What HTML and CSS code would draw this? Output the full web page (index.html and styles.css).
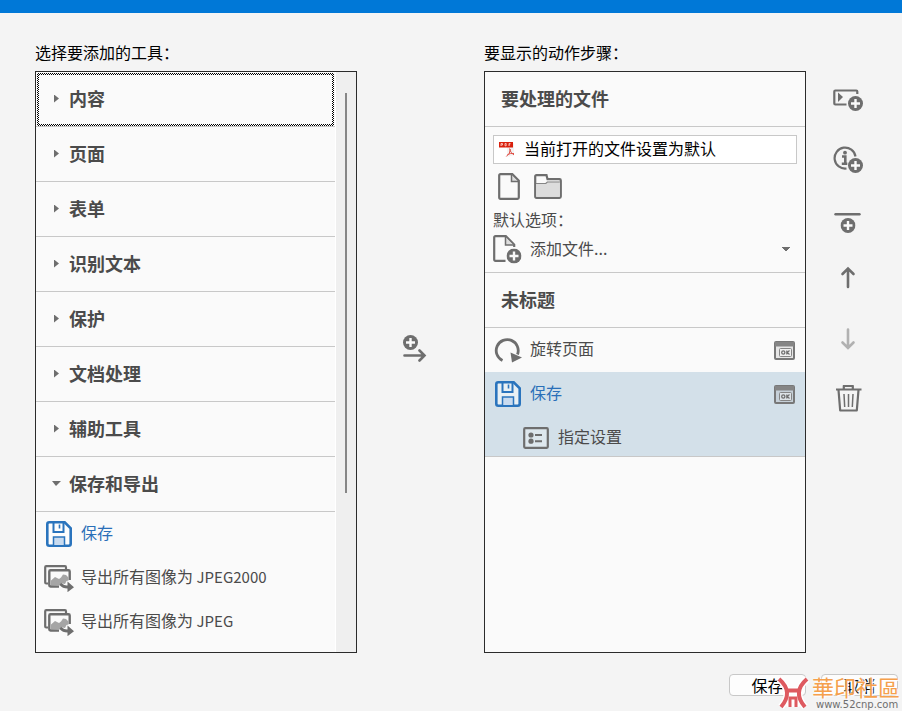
FILE: index.html
```html
<!DOCTYPE html>
<html lang="zh-CN">
  <head>
    <meta charset="UTF-8" />
    <meta name="viewport" content="width=device-width, initial-scale=1.0" />
    <title>创建新动作</title>
    <link rel="stylesheet" href="styles.css" />
  </head>
  <body>
    <svg class="sprite" aria-hidden="true">
      <symbol id="plus" viewBox="0 0 15 15">
        <circle cx="7.5" cy="7.5" r="7.5" fill="#6e6e6e" />
        <path d="M7.5 3v9M3 7.5h9" stroke="#fafafa" stroke-width="2.4" />
      </symbol>
      <symbol id="floppy" viewBox="0 0 26 26">
        <path d="M2.5 1.3h16.2l6 6v15.4q0 2-2 2H3.3q-2 0-2-2V3.3q0-2 2-2z" fill="#fff" fill-opacity=".5" stroke="#2a74bd" stroke-width="2.6" />
        <path d="M7.500 2v9h10V2" fill="none" stroke="#2a74bd" stroke-width="2" />
        <path d="M13.500 3.500v4" stroke="#2a74bd" stroke-width="1.600" />
        <path d="M7.500 24v-8h11v8" fill="#c9dbef" stroke="#2a74bd" stroke-width="1.500" />
      </symbol>
      <symbol id="images" viewBox="0 0 30 27">
        <path d="M4 18.500H2.200Q1.200 18.500 1.200 17.500V2.200Q1.200 1.200 2.200 1.200H21Q22 1.200 22 2.500V4" fill="none" stroke="#6e6e6e" stroke-width="2.200" />
        <path d="M15 21.500H6.500Q5.300 21.500 5.300 20.300V6.500Q5.300 5.300 6.500 5.300H24.500Q25.700 5.300 25.700 6.500V15" fill="none" stroke="#6e6e6e" stroke-width="2.400" />
        <path d="M7 20V15.500l4-3.500 4 2 2-1.500 2-3 3 .5 2.500 2.500v3l-2 .5-1.500 3-4-.8-2 2.800z" fill="#a5a5a5" />
        <path d="M17 17.800q3 3 6.500 2.700V16.500l6.500 5.700-6.500 5v-3.700q-5 0-8-3.500z" fill="#6e6e6e" />
      </symbol>
      <symbol id="page" viewBox="0 0 22 27">
        <path d="M2.500 1.200h11.800l6.500 6.500v16.800q0 1.300-1.300 1.300H2.500q-1.300 0-1.300-1.300v-22q0-1.300 1.300-1.300z" fill="#fafafa" stroke="#6e6e6e" stroke-width="2.200" />
        <path d="M13.500 2v6.500h6.500" fill="#ddd" stroke="#6e6e6e" stroke-width="1.500" />
      </symbol>
      <symbol id="folder" viewBox="0 0 28 25">
        <path d="M1.200 22.500V2.500q0-1.300 1.300-1.300h10l1 4h12q1.300 0 1.300 1.300V22.500q0 1.300-1.300 1.300h-23q-1.300 0-1.300-1.300z" fill="#fafafa" stroke="#6e6e6e" stroke-width="2.200" />
        <path d="M2.200 9.500h9.600l1.500-2h12.500v15.300H2.200z" fill="#dcdcdc" />
        <path d="M2 9.500h9.800l1.500-1.500h12.500" fill="none" stroke="#858585" stroke-width="1.200" />
      </symbol>
      <symbol id="add-file" viewBox="0 0 29 29">
        <path d="M12.500 25.800H2.500q-1.300 0-1.300-1.300v-22q0-1.300 1.300-1.300h10.300l8.400 8.400V12" fill="none" stroke="#6e6e6e" stroke-width="2.200" />
        <path d="M12.500 2v8h8" fill="#ddd" stroke="#6e6e6e" stroke-width="1.500" />
        <use href="#plus" x="13.500" y="13.500" width="15" height="15" />
      </symbol>
      <symbol id="rotate" viewBox="0 0 28 25">
        <path d="M8.500 22.500A11 11 0 1 1 23.500 16.500" fill="none" stroke="#6e6e6e" stroke-width="2.800" />
        <path d="M16.500 14.500L28 19.500 18 24.500z" fill="#6e6e6e" />
      </symbol>
      <symbol id="ok" viewBox="0 0 21 19">
        <rect x="1" y="1" width="19" height="17" rx="1" fill="#8a8a8a" fill-opacity=".18" stroke="#787878" stroke-width="2" />
        <path d="M1 1h19v4.500H1z" fill="#858585" />
        <rect x="5.500" y="7.500" width="12" height="8" rx="1" fill="#fff" fill-opacity=".4" stroke="#858585" />
        <circle cx="9.300" cy="11.500" r="1.600" fill="none" stroke="#6e6e6e" stroke-width="1.300" />
        <path d="M12.800 9.500v4M15.500 9.500l-2.200 2 2.200 2" fill="none" stroke="#6e6e6e" stroke-width="1.200" />
      </symbol>
      <symbol id="settings" viewBox="0 0 26 22">
        <rect x="1.200" y="1.200" width="23.600" height="19.600" rx="1" fill="#fff" fill-opacity=".25" stroke="#6e6e6e" stroke-width="2.200" />
        <circle cx="8" cy="8" r="2.600" fill="#6e6e6e" />
        <circle cx="8" cy="14.200" r="2.600" fill="#6e6e6e" />
        <path d="M12 8h7M12 14.200h7" stroke="#6e6e6e" stroke-width="2" />
      </symbol>
    </svg>

    <header class="titlebar"></header>
    <main class="editor">
      <section class="column">
        <h2 class="caption">选择要添加的工具：</h2>
        <div class="panel tools">
          <div class="tool-list">
            <div class="group"><button class="group-toggle focused">内容</button></div>
            <div class="group"><button class="group-toggle">页面</button></div>
            <div class="group"><button class="group-toggle">表单</button></div>
            <div class="group"><button class="group-toggle">识别文本</button></div>
            <div class="group"><button class="group-toggle">保护</button></div>
            <div class="group"><button class="group-toggle">文档处理</button></div>
            <div class="group"><button class="group-toggle">辅助工具</button></div>
            <div class="group"><button class="group-toggle open">保存和导出</button></div>
            <button class="row active">
              <span class="icon"><svg width="26" height="26"><use href="#floppy" /></svg></span>
              <span class="name">保存</span>
            </button>
            <button class="row">
              <span class="icon"><svg width="30" height="27"><use href="#images" /></svg></span>
              <span class="name">导出所有图像为 <span class="latin">JPEG2000</span></span>
            </button>
            <button class="row">
              <span class="icon"><svg width="30" height="27"><use href="#images" /></svg></span>
              <span class="name">导出所有图像为 <span class="latin">JPEG</span></span>
            </button>
          </div>
          <div class="scrollbar"><div class="thumb"></div></div>
        </div>
      </section>

      <div class="transfer">
        <button class="icon-button" aria-label="添加到右侧">
          <svg width="24" height="27" viewBox="0 0 24 27">
            <use href="#plus" x="0" y="0" width="15" height="15" />
            <path d="M1.500 20.500h20M16.500 15.500l5 5-5 5" fill="none" stroke="#6e6e6e" stroke-width="2.600" stroke-linecap="round" />
          </svg>
        </button>
      </div>

      <section class="column">
        <h2 class="caption">要显示的动作步骤：</h2>
        <div class="panel">
          <h3 class="panel-title">要处理的文件</h3>
          <div class="files">
            <div class="file-field">
              <svg width="18" height="18" viewBox="0 0 18 18" aria-hidden="true">
                <path d="M9 6l7-4v12l-7 2z" fill="#f3f3f3" />
                <path d="M1 1h14v5.500H1z" fill="#d9200d" />
                <path d="M3 5V2.500h1.500V4H3M7 2.500v2.300h1.200V2.500zM11 5V2.500h1.500M11 3.800h1.200" fill="none" stroke="#ffd8d2" stroke-width=".8" />
                <path d="M11.500 7.500q.8 4.500 4.500 6.500M12.300 8q0 5-4 7.500M9.500 13.500q3-1.500 6.500-1" fill="none" stroke="#e0534a" />
              </svg>
              <input type="text" value="当前打开的文件设置为默认" aria-label="要处理的文件" readonly />
            </div>
            <div class="sources">
              <button class="icon-button" aria-label="添加文件"><svg width="22" height="27"><use href="#page" /></svg></button>
              <button class="icon-button" aria-label="添加文件夹"><svg width="28" height="25"><use href="#folder" /></svg></button>
            </div>
            <label class="option-label" for="default-option">默认选项：</label>
            <div class="option">
              <svg width="29" height="29"><use href="#add-file" /></svg>
              <select id="default-option">
                <option>添加文件...</option>
              </select>
            </div>
          </div>
          <h3 class="panel-title">未标题</h3>
          <div class="row">
            <span class="icon"><svg width="28" height="25"><use href="#rotate" /></svg></span>
            <span class="name">旋转页面</span>
            <button class="icon-button prompt" aria-label="提示用户"><svg width="21" height="19"><use href="#ok" /></svg></button>
          </div>
          <div class="selected">
            <div class="row active">
              <span class="icon"><svg width="26" height="26"><use href="#floppy" /></svg></span>
              <span class="name">保存</span>
              <button class="icon-button prompt" aria-label="提示用户"><svg width="21" height="19"><use href="#ok" /></svg></button>
            </div>
            <button class="row sub">
              <span class="icon"><svg width="26" height="22"><use href="#settings" /></svg></span>
              <span class="name">指定设置</span>
            </button>
          </div>
        </div>
      </section>

      <nav class="sidebar">
        <button class="icon-button" aria-label="添加面板">
          <svg width="30" height="30" viewBox="0 0 30 30">
            <path d="M13.500 19.500H2.300q-1 0-1-1V6.500q0-1 1-1h21q1 0 1 1V9" fill="none" stroke="#6e6e6e" stroke-width="2.200" />
            <path d="M5 7.500l5 4.500L5 17z" fill="#6e6e6e" />
            <use href="#plus" x="15" y="11" width="15" height="15" />
          </svg>
        </button>
        <button class="icon-button" aria-label="添加说明">
          <svg width="30" height="30" viewBox="0 0 30 30">
            <path d="M13.500 23.500A10.500 10.500 0 1 1 22.500 11.500" fill="none" stroke="#6e6e6e" stroke-width="2.200" />
            <circle cx="12" cy="7.700" r="1.900" fill="#6e6e6e" />
            <path d="M9 11.500h3.300v7M8.800 18.800h5.500" fill="none" stroke="#6e6e6e" stroke-width="2.600" />
            <use href="#plus" x="15" y="13" width="15" height="15" />
          </svg>
        </button>
        <button class="icon-button" aria-label="添加分隔线">
          <svg width="30" height="30" viewBox="0 0 30 30">
            <path d="M2.500 9.300h24" stroke="#6e6e6e" stroke-width="2.400" stroke-linecap="round" />
            <use href="#plus" x="7.500" y="13" width="15" height="15" />
          </svg>
        </button>
        <button class="icon-button" aria-label="上移">
          <svg width="30" height="30" viewBox="0 0 30 30">
            <path d="M15 22V4M9.500 9L15 3.500 20.500 9" fill="none" stroke="#6e6e6e" stroke-width="2.600" stroke-linecap="round" />
          </svg>
        </button>
        <button class="icon-button" aria-label="下移" disabled>
          <svg width="30" height="30" viewBox="0 0 30 30">
            <path d="M15 4.500V22M9.500 17.500L15 23l5.500-5.500" fill="none" stroke="#b1b1b1" stroke-width="2.600" stroke-linecap="round" />
          </svg>
        </button>
        <button class="icon-button" aria-label="删除">
          <svg width="30" height="30" viewBox="0 0 30 30">
            <path d="M3 4.500h25.500M10.800 4V1h9v3M5.500 5l1.700 20.500h16.600l1.700-20.500" fill="none" stroke="#6e6e6e" stroke-width="2.200" stroke-linejoin="round" />
            <path d="M11 9l.7 13M15.500 9v13M20 9l-.7 13" stroke="#6e6e6e" stroke-width="1.500" />
          </svg>
        </button>
      </nav>
    </main>

    <footer class="actions">
      <button class="action">保存</button>
      <button class="action">取消</button>
      <div class="watermark">
        <svg width="34" height="34" viewBox="0 0 34 34" aria-hidden="true">
          <g fill="none" stroke="#fff" stroke-width="7">
            <path d="M3 3Q18 16 5 31M31 3Q16 16 29 31M9 14.500H25M14 31V22H20V31" />
          </g>
          <g fill="none" stroke="#de5a60" stroke-width="4">
            <path d="M3 3Q18 16 5 31M31 3Q16 16 29 31M9 14.500H25" />
            <path d="M14 31V22H20V31" stroke-width="3" />
          </g>
        </svg>
        <div class="watermark-text">
          <span class="watermark-name">華印社區</span>
          <span class="watermark-url">www.52cnp.com</span>
        </div>
      </div>
    </footer>
  </body>
</html>
```

FILE: styles.css
```css
* {
  box-sizing: border-box;
}
body {
  display: flex;
  flex-direction: column;
  min-height: 100vh;
  margin: 0;
  background-color: #f4f4f4;
  color: #4b4b4b;
  font-family: "Noto Sans CJK SC", sans-serif;
  font-size: 16px;
  line-height: 24px;
}
button,
input,
select {
  padding: 0;
  border: 0;
  background: none;
  color: inherit;
  font: inherit;
}
svg {
  display: block;
  flex: none;
}
.sprite {
  position: absolute;
  width: 0;
  height: 0;
}
.titlebar {
  height: 13px;
  background-color: #0078d7;
}
.editor {
  flex: 1;
  display: grid;
  grid-template-columns: 1fr 127px 1fr 96px;
  padding: 29px 0 0 35px;
}
.column {
  display: flex;
  flex-direction: column;
  min-width: 0;
}
.caption {
  margin: 0 0 9px;
  color: #000;
  font-size: 16px;
  font-weight: 400;
  line-height: 20px;
}
.panel {
  flex: 1;
  border: 1px solid #2b2b2b;
  background-color: #fafafa;
}

/* tools */
.tools {
  display: flex;
}
.tool-list {
  flex: 1;
}
.group {
  height: 55px;
  padding: 1px 1px 0;
  border-bottom: 1px solid #c8c8c8;
}
.group-toggle {
  display: flex;
  align-items: center;
  width: 100%;
  height: 53px;
  padding: 0 0 4px 15px;
  border: 2px solid transparent;
  font-size: 18px;
  font-weight: 700;
}
.group-toggle::before {
  content: "";
  width: 15px;
  height: 8px;
  margin-top: 2px;
  background-color: #6e6e6e;
  clip-path: polygon(0 0, 5px 4px, 0 8px);
}
.group-toggle.open::before {
  width: 17px;
  height: 5px;
  margin-left: -2px;
  clip-path: polygon(0 0, 9px 0, 4px 5px);
}
.group-toggle.focused {
  background:
    linear-gradient(#fafafa, #fafafa) padding-box,
    repeating-conic-gradient(#000 0 25%, #fff 0 50%) 0 0 / 2px 2px border-box;
}
.scrollbar {
  width: 21px;
  padding: 21px 0 0 9px;
  border-left: 1px solid #fff;
  background-color: #efefef;
}
.thumb {
  width: 2px;
  height: 400px;
  background-color: #868686;
}

/* rows */
.row {
  display: flex;
  align-items: center;
  gap: 7px;
  width: 100%;
  height: 44px;
  padding: 0 10px 0 8px;
}
.icon {
  display: flex;
  justify-content: center;
  width: 30px;
}
.name {
  padding-bottom: 4px;
}
.latin {
  font-size: 15px;
}
.row.active {
  color: #2a6fb8;
}
.prompt {
  margin-left: auto;
}
.selected {
  border-bottom: 1px solid #c8c8c8;
  background-color: #d3e0e9;
}
.row.sub {
  height: 40px;
  padding-top: 4px;
  padding-left: 36px;
}

.icon-button {
  display: block;
}
.transfer {
  display: flex;
  align-items: center;
  padding: 2px 0 0 46px;
}

/* files */
.panel-title {
  height: 55px;
  margin: 0;
  padding-left: 16px;
  border-bottom: 1px solid #c8c8c8;
  font-size: 18px;
  font-weight: 700;
  line-height: 52px;
}
.files {
  padding: 8px 8px 4px;
  border-bottom: 1px solid #c8c8c8;
}
.file-field {
  display: flex;
  align-items: center;
  gap: 8px;
  height: 29px;
  padding-left: 4px;
  border: 1px solid #c8c8c8;
  background-color: #fff;
  color: #000;
}
.file-field input {
  flex: 1;
  min-width: 0;
  padding-bottom: 4px;
}
.sources {
  display: flex;
  align-items: center;
  gap: 14px;
  height: 44px;
  padding-left: 5px;
}
.option-label {
  display: block;
  line-height: 22px;
}
.option {
  display: flex;
  align-items: center;
  gap: 8px;
  height: 38px;
}
.option select {
  flex: 1;
  height: 29px;
  padding-bottom: 3px;
  appearance: none;
  background:
    linear-gradient(to bottom left, #6e6e6e 50%, transparent 50%) right 11px center / 5px 5px no-repeat,
    linear-gradient(to bottom right, #6e6e6e 50%, transparent 50%) right 6px center / 5px 5px no-repeat;
}

.sidebar {
  display: flex;
  flex-direction: column;
  gap: 30px;
  padding: 43px 0 0 27px;
}

/* footer */
.actions {
  position: relative;
  display: flex;
  justify-content: flex-end;
  gap: 15px;
  padding: 21px 4px 15px 0;
}
.action {
  width: 77px;
  height: 22px;
  border: 1px solid #c8c8c8;
  border-radius: 4px;
  background-color: #fdfdfd;
  color: #000;
  line-height: 18px;
}
.watermark {
  position: absolute;
  right: 2px;
  bottom: 0;
  display: flex;
  align-items: center;
  gap: 2px;
}
.watermark-text {
  display: flex;
  flex-direction: column;
}
.watermark-name {
  color: #f5a04c;
  font-family: "Noto Sans CJK TC", sans-serif;
  font-size: 22px;
  line-height: 24px;
  text-shadow: 0 0 2px #fff, 1px 1px 1px #fff;
}
.watermark-url {
  padding-left: 4px;
  color: #6e6e6e;
  font-family: "DejaVu Sans", sans-serif;
  font-size: 10px;
  line-height: 13px;
}
```
